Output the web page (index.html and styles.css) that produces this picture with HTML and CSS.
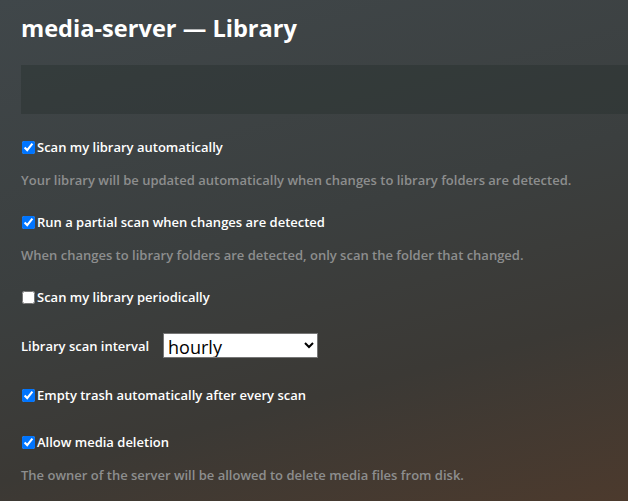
FILE: index.html
```html
<!DOCTYPE html>
<html lang="en">
<head>
<meta charset="utf-8">
<title>media-server — Library</title>
<link rel="stylesheet" href="styles.css">
</head>
<body>
<div class="page">
  <h1 class="title">media-server — Library</h1>
  <div class="tabbar"></div>
  <div class="settings">
    <div class="setting">
      <label class="check"><input type="checkbox" checked><span>Scan my library automatically</span></label>
      <p class="desc">Your library will be updated automatically when changes to library folders are detected.</p>
    </div>
    <div class="setting">
      <label class="check"><input type="checkbox" checked><span>Run a partial scan when changes are detected</span></label>
      <p class="desc">When changes to library folders are detected, only scan the folder that changed.</p>
    </div>
    <div class="setting short">
      <label class="check"><input type="checkbox"><span>Scan my library periodically</span></label>
    </div>
    <div class="setting short select-row">
      <label class="field-label" for="interval">Library scan interval</label>
      <select id="interval" class="select">
        <option>hourly</option>
        <option>every 2 hours</option>
        <option>daily</option>
      </select>
    </div>
    <div class="setting short">
      <label class="check"><input type="checkbox" checked><span>Empty trash automatically after every scan</span></label>
    </div>
    <div class="setting">
      <label class="check"><input type="checkbox" checked><span>Allow media deletion</span></label>
      <p class="desc">The owner of the server will be allowed to delete media files from disk.</p>
    </div>
  </div>
</div>
</body>
</html>
```

FILE: styles.css
```css
html, body {
  margin: 0;
  padding: 0;
  height: 100%;
}

body {
  font-family: "Open Sans", "Noto Sans", "Liberation Sans", sans-serif;
  color: #ffffff;
  background: linear-gradient(165deg, #40474a 0%, #3b3f3f 45%, #3b3935 72%, #4c3a2d 100%);
  background-attachment: fixed;
  overflow: hidden;
}

.page {
  padding: 14px 0 0 21px;
}

.title {
  margin: 0;
  font-size: 23.6px;
  line-height: 28px;
  font-weight: 700;
  color: #ffffff;
}

.tabbar {
  margin-top: 23px;
  height: 49px;
  background: rgba(40, 48, 46, 0.45);
}

.settings {
  padding-top: 23px;
}

.setting {
  margin-bottom: 22px;
}

.setting.short {
  margin-bottom: 27px;
}

.check {
  display: flex;
  align-items: center;
  height: 20px;
  font-size: 13px;
  font-weight: 600;
  line-height: 20px;
  color: #ffffff;
}

.check input {
  width: 13px;
  height: 13px;
  margin: 0 2px 0 1px;
  accent-color: #0075ff;
}

.desc {
  margin: 13px 0 0;
  font-size: 13px;
  line-height: 20px;
  font-weight: 600;
  color: #8d8e8e;
}

.select-row {
  display: flex;
  align-items: center;
  gap: 14px;
  margin-top: -1px;
}

.field-label {
  font-size: 13px;
  font-weight: 600;
  line-height: 20px;
  color: #ffffff;
}

.select {
  width: 155px;
  height: 25px;
  font-family: "Open Sans", "Noto Sans", sans-serif;
  font-size: 18px;
  color: #000000;
  background: #ffffff;
  border: 1px solid #767676;
  border-radius: 0;
  padding: 0;
}
```
